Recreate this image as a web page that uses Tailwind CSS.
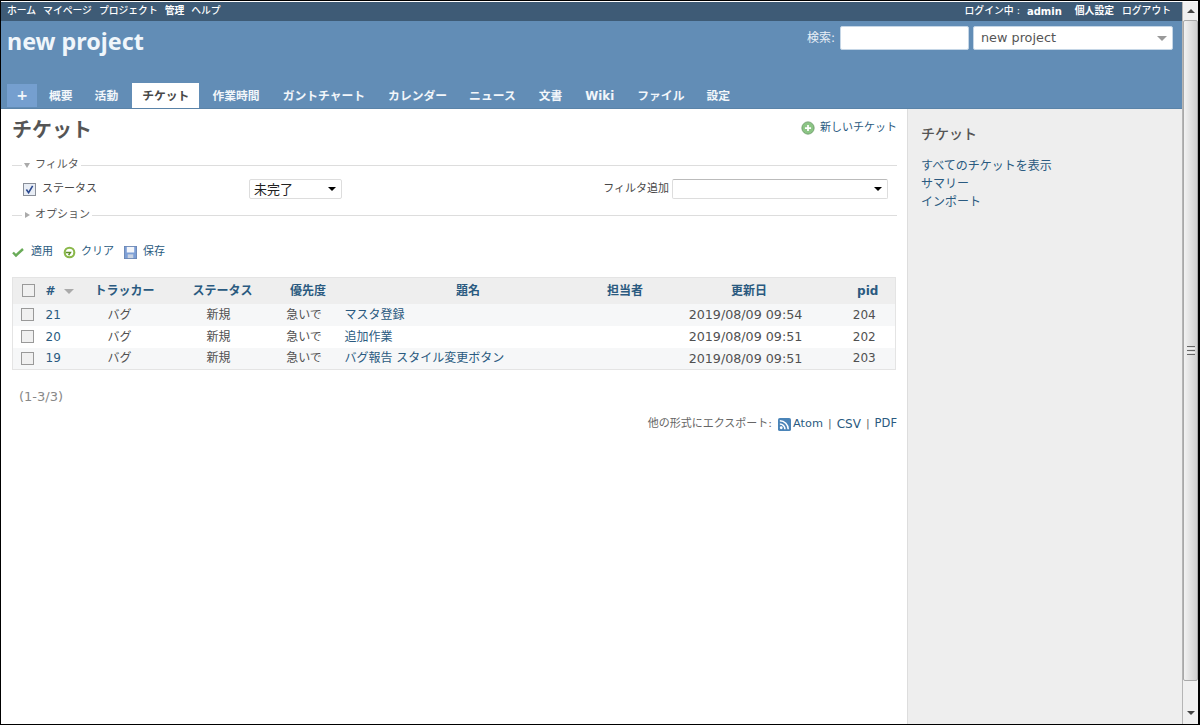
<!DOCTYPE html>
<html lang="ja">
<head>
<meta charset="UTF-8">
<title>チケット - new project</title>
<script src="https://cdn.jsdelivr.net/npm/@tailwindcss/browser@4"></script>
</head>
<body class="bg-black overflow-hidden">
<div class="w-[1200px] h-[725px] flex border-l border-b border-t border-r-2 border-black bg-white pt-px text-[#484848] text-[12px] font-['DejaVu_Sans','Noto_Sans_CJK_JP',sans-serif] overflow-hidden">
  <div class="w-[1181px] h-full flex flex-col shrink-0">
    <!-- top menu -->
    <div class="h-[19px] bg-[#3e5b76] text-white text-[9.800px] font-medium flex justify-between items-center pl-[6px] pr-[11px] shrink-0">
      <div class="flex gap-[7px]"><a>ホーム</a><a>マイページ</a><a>プロジェクト</a><a class="font-bold">管理</a><a>ヘルプ</a></div>
      <div class="flex"><span>ログイン中 :</span><b class="ml-[7px] mr-[13px] text-[10px]">admin</b><a class="mr-[8px] font-bold">個人設定</a><a>ログアウト</a></div>
    </div>
    <!-- header -->
    <div class="h-[88px] bg-[#628db6] text-white shrink-0 flex flex-col justify-between">
      <div class="flex justify-between">
        <h1 class="pl-[6px] pt-[6px] text-[23.300px] leading-[29px] font-bold text-[#f0f6fb] font-['Noto_Sans',sans-serif]">new project</h1>
        <div class="flex items-center mt-[5px] pr-[9px] h-[24px]">
          <span class="text-[12px] mr-[5px] text-[#e8eff6]">検索:</span>
          <div class="w-[129px] h-[24px] bg-white rounded-[2px] border border-[#c5d6e6]"></div>
          <div class="w-[200px] h-[24px] ml-[4px] bg-white rounded-[2px] border border-[#c5d6e6] flex items-center justify-between pl-[7px] pr-[5px] text-[#555] text-[12.800px]">
            <span>new project</span><span class="w-0 h-0 border-x-[5px] border-x-transparent border-t-[5px] border-t-[#999]"></span>
          </div>
        </div>
      </div>
      <div class="flex items-end pl-[6px] h-[26px] border-b border-[#5a83a8] text-[11.800px] font-bold text-[#f2f6fa]">
        <a class="w-[30px] h-[23px] mb-px bg-[#759fcf] flex items-center justify-center mr-[6px] text-[14px]">+</a>
        <a class="h-[24px] leading-[24px] px-[6px] mr-[10px]">概要</a>
        <a class="h-[24px] leading-[24px] px-[6px] mr-[8px]">活動</a>
        <a class="h-[25px] leading-[27px] px-[10px] bg-white text-[#484848] mr-[7px]">チケット</a>
        <a class="h-[24px] leading-[24px] px-[6px] mr-[11px]">作業時間</a>
        <a class="h-[24px] leading-[24px] px-[6px] mr-[11px]">ガントチャート</a>
        <a class="h-[24px] leading-[24px] px-[6px] mr-[10px]">カレンダー</a>
        <a class="h-[24px] leading-[24px] px-[6px] mr-[11px]">ニュース</a>
        <a class="h-[24px] leading-[24px] px-[6px] mr-[11px]">文書</a>
        <a class="h-[24px] leading-[24px] px-[6px] mr-[11px]">Wiki</a>
        <a class="h-[24px] leading-[24px] px-[6px] mr-[10px]">ファイル</a>
        <a class="h-[24px] leading-[24px] px-[6px]">設定</a>
      </div>
    </div>
    <!-- body -->
    <div class="flex-1 flex min-h-0">
      <div class="w-[906px] shrink-0 pl-[11px] pr-[10px]">
        <div class="flex justify-between items-start h-[40px] pt-[6px]">
          <h2 class="text-[20px] leading-[30px] font-bold text-[#555]">チケット</h2>
          <a class="flex items-center mt-[5px] text-[#2a5a80] text-[11px]">
            <svg class="w-[14px] h-[14px] mr-[5px]" viewBox="0 0 16 16"><circle cx="8" cy="8" r="7" fill="#8cc585" stroke="#6b9a68"/><path d="M8 4.500v7M4.500 8h7" stroke="#fff" stroke-width="2"/></svg>新しいチケット</a>
        </div>
        <!-- filter fieldset -->
        <div class="flex items-center h-[14px] mt-[9px] text-[11px]">
          <span class="w-[10px] h-px bg-[#ddd]"></span>
          <span class="ml-[2px] w-0 h-0 border-x-[3.500px] border-x-transparent border-t-[5px] border-t-[#aaa]"></span>
          <span class="ml-[5px] mr-[2px] pt-px text-[#555]">フィルタ</span>
          <span class="flex-1 h-px bg-[#ddd]"></span>
        </div>
        <div class="flex items-center h-[36px] pb-[2px] text-[11px]">
          <span class="ml-[11px] w-[13px] h-[13px] border border-[#8a8f99] bg-[#e8edf5] flex items-center justify-center shrink-0"><svg class="w-[9px] h-[9px]" viewBox="0 0 10 10"><path d="M1.500 5l2.500 3.500L8.500 1" fill="none" stroke="#2c4a90" stroke-width="1.800"/></svg></span>
          <span class="ml-[6px] w-[207px]">ステータス</span>
          <div class="w-[93px] h-[20px] border border-[#ddd] rounded-[2px] flex items-center justify-between pl-[4px] pr-[5px] text-[13px] text-[#222]">
            <span class="pt-px">未完了</span><span class="w-0 h-0 border-x-[4px] border-x-transparent border-t-[4px] border-t-black"></span>
          </div>
          <span class="ml-auto mr-[3px]">フィルタ追加</span>
          <div class="w-[216px] h-[20px] mr-[9px] border border-[#ddd] border-t-[#bbb] rounded-[2px] flex items-center justify-end pr-[5px]">
            <span class="w-0 h-0 border-x-[4px] border-x-transparent border-t-[4px] border-t-black"></span>
          </div>
        </div>
        <div class="flex items-center h-[14px] text-[11px]">
          <span class="w-[10px] h-px bg-[#ddd]"></span>
          <span class="ml-[3px] w-0 h-0 border-y-[3.500px] border-y-transparent border-l-[5px] border-l-[#aaa]"></span>
          <span class="ml-[5px] mr-[2px] text-[#555]">オプション</span>
          <span class="flex-1 h-px bg-[#ddd]"></span>
        </div>
        <!-- query buttons -->
        <div class="flex items-center h-[18px] mt-[21px] text-[11px] text-[#2a5a80]">
          <svg class="w-[12px] h-[12px] mr-[7px]" viewBox="0 0 12 12"><path d="M1 6.500l3 3L11 3" fill="none" stroke="#69ab58" stroke-width="2.400"/></svg>
          <a class="mr-[10px]">適用</a>
          <svg class="w-[13px] h-[13px] mr-[5px]" viewBox="0 0 14 14"><circle cx="7" cy="7" r="5.200" fill="none" stroke="#8ab84a" stroke-width="2.200"/><path d="M3 7h5l-2 3" fill="none" stroke="#5f8f2a" stroke-width="1.600"/></svg>
          <a class="mr-[10px]">クリア</a>
          <svg class="w-[13px] h-[13px] mr-[6px]" viewBox="0 0 14 14"><rect x="0.500" y="0.500" width="13" height="13" fill="#7d9fd6" stroke="#6a86b5"/><rect x="3" y="1" width="8" height="6" fill="#f4f6fa"/><rect x="4" y="9" width="6" height="4" fill="#c8d2e2"/></svg>
          <a>保存</a>
        </div>
        <!-- issue list -->
        <table class="w-[884px] mt-[16px] table-fixed border-collapse border border-[#e4e4e4] text-center text-[12px] text-[#505050]">
          <colgroup><col class="w-[30px]"><col class="w-[28px]"><col class="w-[98px]"><col class="w-[100px]"><col class="w-[71px]"><col class="w-[245px]"><col class="w-[73px]"><col class="w-[176px]"><col></colgroup>
          <thead>
            <tr class="h-[26px] bg-[#eeeeee] text-[#2a5a80] font-bold whitespace-nowrap">
              <th class="pl-[1px]"><span class="block mx-auto w-[13px] h-[13px] border border-[#999] bg-[#f0f0f0]"></span></th>
              <th class="text-left pl-[3px]"># <span class="inline-block ml-[4px] align-middle w-0 h-0 border-x-[5px] border-x-transparent border-t-[5px] border-t-[#aaa]"></span></th>
              <th class="pl-[10px]">トラッカー</th><th class="pl-[8px]">ステータス</th><th class="pl-[8px]">優先度</th><th class="pl-[12px]">題名</th><th class="pl-[8px]">担当者</th><th class="pl-[7px]">更新日</th><th class="pl-[7px]">pid</th>
            </tr>
          </thead>
          <tbody>
            <tr class="h-[22px] bg-[#f6f7f8]">
              <td><span class="block mx-auto w-[13px] h-[13px] border border-[#999] bg-[#f0f0f0]"></span></td>
              <td class="text-left pl-[3px] text-[#2a5a80]">21</td><td>バグ</td><td>新規</td><td>急いで</td>
              <td class="text-left pl-[5px] text-[#2a5a80]">マスタ登録</td><td></td><td class="text-[12.700px]">2019/08/09 09:54</td><td>204</td>
            </tr>
            <tr class="h-[22px] bg-white">
              <td><span class="block mx-auto w-[13px] h-[13px] border border-[#999] bg-[#f0f0f0]"></span></td>
              <td class="text-left pl-[3px] text-[#2a5a80]">20</td><td>バグ</td><td>新規</td><td>急いで</td>
              <td class="text-left pl-[5px] text-[#2a5a80]">追加作業</td><td></td><td class="text-[12.700px]">2019/08/09 09:51</td><td>202</td>
            </tr>
            <tr class="h-[22px] bg-[#f6f7f8]">
              <td><span class="block mx-auto w-[13px] h-[13px] border border-[#999] bg-[#f0f0f0]"></span></td>
              <td class="text-left pl-[3px] text-[#2a5a80]">19</td><td>バグ</td><td>新規</td><td>急いで</td>
              <td class="text-left pl-[5px] text-[#2a5a80]">バグ報告 スタイル変更ボタン</td><td></td><td class="text-[12.700px]">2019/08/09 09:51</td><td>203</td>
            </tr>
          </tbody>
        </table>
        <p class="mt-[18px] ml-[7px] text-[#888] text-[13px] leading-[18px]">(1-3/3)</p>
        <div class="flex justify-end items-center mt-[9px] text-[11px] text-[#666]">
          <span class="mr-[6px]">他の形式にエクスポート:</span>
          <svg class="w-[13px] h-[13px] mr-[2px]" viewBox="0 0 14 14"><rect width="14" height="14" rx="2" fill="#4a84b8"/><circle cx="3.500" cy="10.500" r="1.500" fill="#fff"/><path d="M2 6.500a5.500 5.500 0 0 1 5.500 5.500M2 3a9 9 0 0 1 9 9" fill="none" stroke="#fff" stroke-width="1.700"/></svg>
          <a class="text-[#2a5a80] text-[11.300px]">Atom</a><span class="mx-[5px]">|</span><a class="text-[#2a5a80] text-[12px]">CSV</a><span class="mx-[5px]">|</span><a class="text-[#2a5a80] text-[11.500px]">PDF</a>
        </div>
      </div>
      <!-- sidebar -->
      <div class="flex-1 bg-[#eeeeee] border-l border-[#dddddd] pl-[13px] pt-[15px] text-[#2a5a80] text-[12px] leading-[18px]">
        <h3 class="text-[14px] leading-[20px] font-medium text-[#555] mb-[13px]">チケット</h3>
        <a class="block">すべてのチケットを表示</a>
        <a class="block">サマリー</a>
        <a class="block">インポート</a>
      </div>
    </div>
  </div>
  <!-- window scrollbar -->
  <div class="w-[16px] h-full bg-[#f0f0f0] border-l border-[#b5b5b5] flex flex-col items-center shrink-0">
    <div class="h-[18px] flex items-center"><span class="w-0 h-0 border-x-[4px] border-x-transparent border-b-[4px] border-b-[#444]"></span></div>
    <div class="w-full h-[661px] bg-gradient-to-r from-[#f2f2f2] to-[#cfcfcf] border border-[#a8a8a8] rounded-[2px] flex flex-col items-center justify-center gap-[1px]">
      <span class="w-[8px] h-px bg-[#666]"></span><span class="w-[8px] h-px bg-[#eee]"></span><span class="w-[8px] h-px bg-[#666]"></span><span class="w-[8px] h-px bg-[#eee]"></span><span class="w-[8px] h-px bg-[#666]"></span>
    </div>
    <div class="flex-1 flex items-end pb-[9px]"><span class="w-0 h-0 border-x-[4px] border-x-transparent border-t-[4px] border-t-[#444]"></span></div>
  </div>
</div>
</body>
</html>
